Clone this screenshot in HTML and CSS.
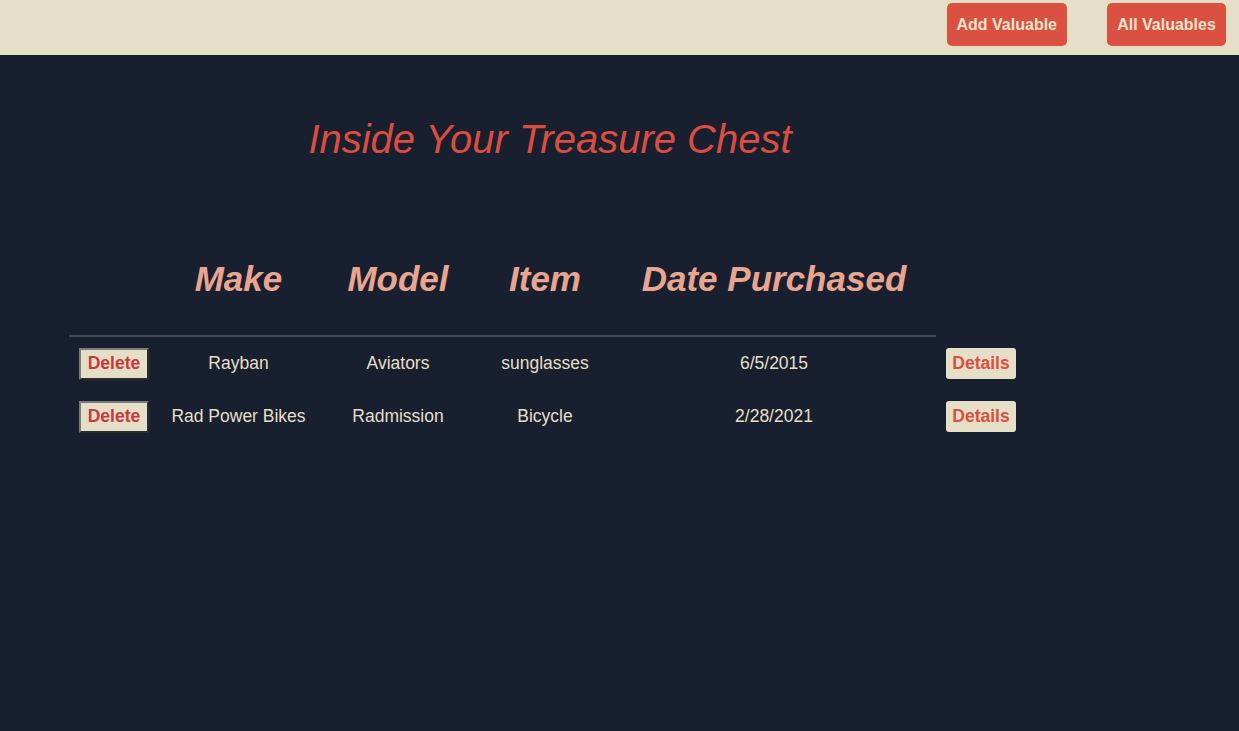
FILE: index.html
```html
<!DOCTYPE html>
<html>
<head>
<meta charset="utf-8">
<link rel="stylesheet" href="styles.css">
</head>
<body>
<header class="topbar">
  <button class="nav-btn">Add Valuable</button>
  <button class="nav-btn">All Valuables</button>
</header>
<main class="content">
  <h1 class="title">Inside Your Treasure Chest</h1>
  <table class="valuables">
    <colgroup>
      <col class="c-del"><col class="c-make"><col class="c-model"><col class="c-item"><col class="c-date"><col class="c-det">
    </colgroup>
    <thead>
      <tr>
        <th></th><th>Make</th><th>Model</th><th>Item</th><th>Date Purchased</th>
      </tr>
    </thead>
    <tbody>
      <tr>
        <td><button class="del-btn">Delete</button></td>
        <td>Rayban</td><td>Aviators</td><td>sunglasses</td><td>6/5/2015</td>
        <td><button class="det-btn">Details</button></td>
      </tr>
      <tr>
        <td><button class="del-btn">Delete</button></td>
        <td>Rad Power Bikes</td><td>Radmission</td><td>Bicycle</td><td>2/28/2021</td>
        <td><button class="det-btn">Details</button></td>
      </tr>
    </tbody>
  </table>
</main>
</body>
</html>
```
FILE: styles.css
```css
html, body {
  margin: 0;
  padding: 0;
}
body {
  background: #18202f;
  font-family: "Liberation Sans", Arial, sans-serif;
  min-height: 731px;
}
.topbar {
  height: 55px;
  background: #e6dfc8;
  display: flex;
  justify-content: flex-end;
  align-items: flex-start;
  gap: 40px;
  padding: 3px 13px 0 0;
  box-sizing: border-box;
}
.nav-btn {
  height: 43px;
  padding: 0 10px;
  border: none;
  border-radius: 5px;
  background: #da5142;
  color: #ece3cc;
  font-family: "Liberation Sans", Arial, sans-serif;
  font-weight: bold;
  font-size: 16px;
  min-width: 119px;
}
.content {
  margin-left: 69px;
  width: 962px;
  padding-top: 61px;
}
.title {
  margin: 0;
  text-align: center;
  font-style: italic;
  font-weight: normal;
  font-size: 40px;
  line-height: 46px;
  color: #dc4d3f;
}
.valuables {
  margin-top: 97px;
  border-collapse: collapse;
  table-layout: fixed;
  width: 957px;
}
.c-del { width: 90px; }
.c-make { width: 159px; }
.c-model { width: 160px; }
.c-item { width: 134px; }
.c-date { width: 324px; }
.c-det { width: 90px; }
.valuables th {
  padding: 0 0 36px 0;
  font-size: 35px;
  line-height: 40px;
  font-style: italic;
  font-weight: bold;
  color: #e9a590;
  border-bottom: 2px solid #454a52;
  text-align: center;
}
.valuables td {
  padding: 10px 0;
  height: 33px;
  text-align: center;
  vertical-align: middle;
  color: #e6dfc8;
  font-size: 17.5px;
}
.del-btn {
  display: block;
  margin: 0 auto;
  width: 70px;
  height: 32px;
  padding: 0;
  background: #e6dfc8;
  color: #c9393b;
  font-family: "Liberation Sans", Arial, sans-serif;
  font-weight: bold;
  font-size: 17.5px;
  border: 2px solid;
  border-color: #7b7b7b #2c2c2c #2c2c2c #7b7b7b;
}
.det-btn {
  display: block;
  margin: 0 auto;
  width: 70px;
  height: 31px;
  padding: 0;
  border: none;
  border-radius: 3px;
  background: #e6dfc8;
  color: #db4f41;
  font-family: "Liberation Sans", Arial, sans-serif;
  font-weight: bold;
  font-size: 17.5px;
}
```
